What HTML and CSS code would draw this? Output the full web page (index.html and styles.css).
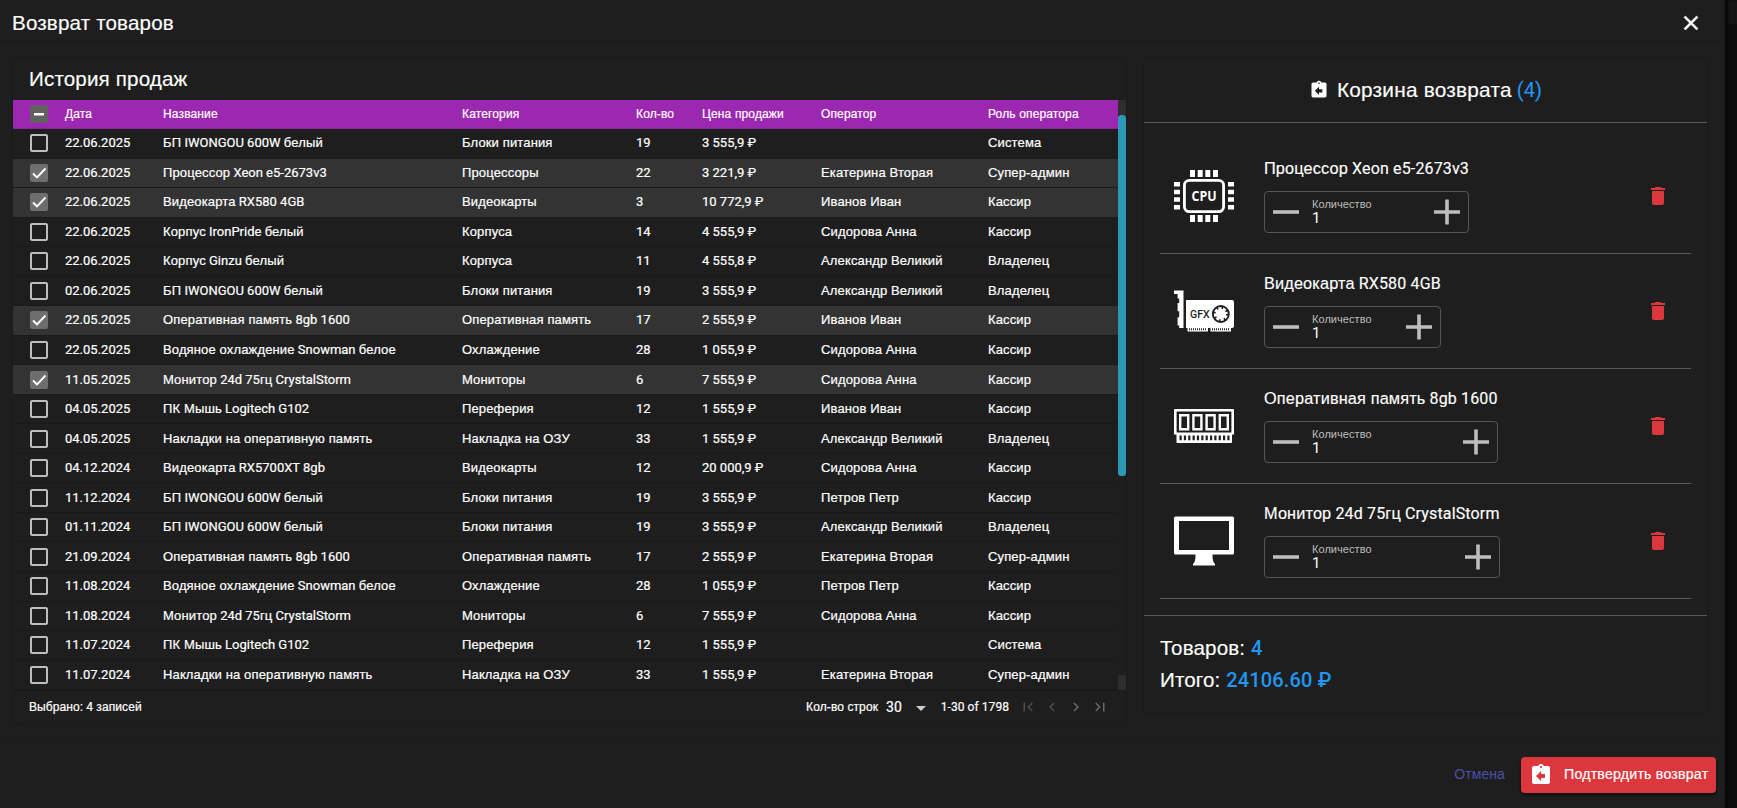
FILE: index.html
```html
<!DOCTYPE html>
<html lang="ru">
<head>
<meta charset="utf-8">
<title>Возврат товаров</title>
<link rel="stylesheet" href="styles.css">
</head>
<body>
<svg class="sprite" width="0" height="0">
  <symbol id="return" viewBox="0 0 24 24"><path d="M19 3h-4.18C14.4 1.84 13.3 1 12 1s-2.4.84-2.82 2H5c-1.1 0-2 .9-2 2v14c0 1.1.9 2 2 2h14c1.1 0 2-.9 2-2V5c0-1.1-.9-2-2-2zm-7 0c.55 0 1 .45 1 1s-.45 1-1 1-1-.45-1-1 .45-1 1-1zm4 12h-4v3l-5-5 5-5v3h4v4z"/></symbol>
  <symbol id="trash" viewBox="0 0 24 24"><path d="M6 19c0 1.1.9 2 2 2h8c1.100 0 2-.9 2-2V7H6v12zM19 4h-3.500l-1-1h-5l-1 1H5v2h14V4z"/></symbol>
  <symbol id="off" viewBox="0 0 24 24"><path d="M19 5v14H5V5h14m0-2H5c-1.100 0-2 .9-2 2v14c0 1.100.9 2 2 2h14c1.100 0 2-.9 2-2V5c0-1.100-.9-2-2-2z"/></symbol>
  <symbol id="on" viewBox="0 0 24 24"><rect x="3" y="3" width="18" height="18" rx="2" fill="#6e6e6e"/><path d="M6 12.500l4 4 8.500-9" fill="none" stroke="#fff" stroke-width="1.900"/></symbol>
  <symbol id="some" viewBox="0 0 24 24"><rect x="3" y="3" width="18" height="18" rx="2" fill="#616161"/><path d="M7 11h10v2.500H7z" fill="#fff"/></symbol>
</svg>
<div class="screen">
<div class="dialog">
  <header class="dialog-head">
    <h1>Возврат товаров</h1>
    <svg class="close" viewBox="0 0 24 24"><path d="M19 6.410L17.590 5 12 10.590 6.410 5 5 6.410 10.590 12 5 17.590 6.410 19 12 13.410 17.590 19 19 17.590 13.410 12z"/></svg>
  </header>
  <main class="content">
    <section class="card history">
      <h2>История продаж</h2>
      <div class="table-wrap">
        <table>
          <colgroup><col class="c-check"><col class="c-date"><col class="c-name"><col class="c-cat"><col class="c-qty"><col class="c-price"><col class="c-oper"><col class="c-role"></colgroup>
          <thead><tr><th><svg class="box"><use href="#some"/></svg></th><th>Дата</th><th>Название</th><th>Категория</th><th>Кол-во</th><th>Цена продажи</th><th>Оператор</th><th>Роль оператора</th></tr></thead>
          <tbody>
            <tr><td><svg class="box"><use href="#off"/></svg></td><td class="r">22.06.2025</td><td>БП<span class="r"> IWONGOU 600W </span>белый</td><td>Блоки питания</td><td class="r">19</td><td class="r p">3 555,9 ₽</td><td></td><td>Система</td></tr>
            <tr class="sel"><td><svg class="box"><use href="#on"/></svg></td><td class="r">22.06.2025</td><td>Процессор<span class="r"> Xeon e5-2673v3</span></td><td>Процессоры</td><td class="r">22</td><td class="r p">3 221,9 ₽</td><td>Екатерина Вторая</td><td>Супер-админ</td></tr>
            <tr class="sel"><td><svg class="box"><use href="#on"/></svg></td><td class="r">22.06.2025</td><td>Видеокарта<span class="r"> RX580 4GB</span></td><td>Видеокарты</td><td class="r">3</td><td class="r p">10 772,9 ₽</td><td>Иванов Иван</td><td>Кассир</td></tr>
            <tr><td><svg class="box"><use href="#off"/></svg></td><td class="r">22.06.2025</td><td>Корпус<span class="r"> IronPride </span>белый</td><td>Корпуса</td><td class="r">14</td><td class="r p">4 555,9 ₽</td><td>Сидорова Анна</td><td>Кассир</td></tr>
            <tr><td><svg class="box"><use href="#off"/></svg></td><td class="r">22.06.2025</td><td>Корпус<span class="r"> Ginzu </span>белый</td><td>Корпуса</td><td class="r">11</td><td class="r p">4 555,8 ₽</td><td>Александр Великий</td><td>Владелец</td></tr>
            <tr><td><svg class="box"><use href="#off"/></svg></td><td class="r">02.06.2025</td><td>БП<span class="r"> IWONGOU 600W </span>белый</td><td>Блоки питания</td><td class="r">19</td><td class="r p">3 555,9 ₽</td><td>Александр Великий</td><td>Владелец</td></tr>
            <tr class="sel"><td><svg class="box"><use href="#on"/></svg></td><td class="r">22.05.2025</td><td>Оперативная память<span class="r"> 8gb 1600</span></td><td>Оперативная память</td><td class="r">17</td><td class="r p">2 555,9 ₽</td><td>Иванов Иван</td><td>Кассир</td></tr>
            <tr><td><svg class="box"><use href="#off"/></svg></td><td class="r">22.05.2025</td><td>Водяное охлаждение<span class="r"> Snowman </span>белое</td><td>Охлаждение</td><td class="r">28</td><td class="r p">1 055,9 ₽</td><td>Сидорова Анна</td><td>Кассир</td></tr>
            <tr class="sel"><td><svg class="box"><use href="#on"/></svg></td><td class="r">11.05.2025</td><td>Монитор<span class="r"> 24d 75</span>гц<span class="r"> CrystalStorm</span></td><td>Мониторы</td><td class="r">6</td><td class="r p">7 555,9 ₽</td><td>Сидорова Анна</td><td>Кассир</td></tr>
            <tr><td><svg class="box"><use href="#off"/></svg></td><td class="r">04.05.2025</td><td>ПК Мышь<span class="r"> Logitech G102</span></td><td>Переферия</td><td class="r">12</td><td class="r p">1 555,9 ₽</td><td>Иванов Иван</td><td>Кассир</td></tr>
            <tr><td><svg class="box"><use href="#off"/></svg></td><td class="r">04.05.2025</td><td>Накладки на оперативную память</td><td>Накладка на ОЗУ</td><td class="r">33</td><td class="r p">1 555,9 ₽</td><td>Александр Великий</td><td>Владелец</td></tr>
            <tr><td><svg class="box"><use href="#off"/></svg></td><td class="r">04.12.2024</td><td>Видеокарта<span class="r"> RX5700XT 8gb</span></td><td>Видеокарты</td><td class="r">12</td><td class="r p">20 000,9 ₽</td><td>Сидорова Анна</td><td>Кассир</td></tr>
            <tr><td><svg class="box"><use href="#off"/></svg></td><td class="r">11.12.2024</td><td>БП<span class="r"> IWONGOU 600W </span>белый</td><td>Блоки питания</td><td class="r">19</td><td class="r p">3 555,9 ₽</td><td>Петров Петр</td><td>Кассир</td></tr>
            <tr><td><svg class="box"><use href="#off"/></svg></td><td class="r">01.11.2024</td><td>БП<span class="r"> IWONGOU 600W </span>белый</td><td>Блоки питания</td><td class="r">19</td><td class="r p">3 555,9 ₽</td><td>Александр Великий</td><td>Владелец</td></tr>
            <tr><td><svg class="box"><use href="#off"/></svg></td><td class="r">21.09.2024</td><td>Оперативная память<span class="r"> 8gb 1600</span></td><td>Оперативная память</td><td class="r">17</td><td class="r p">2 555,9 ₽</td><td>Екатерина Вторая</td><td>Супер-админ</td></tr>
            <tr><td><svg class="box"><use href="#off"/></svg></td><td class="r">11.08.2024</td><td>Водяное охлаждение<span class="r"> Snowman </span>белое</td><td>Охлаждение</td><td class="r">28</td><td class="r p">1 055,9 ₽</td><td>Петров Петр</td><td>Кассир</td></tr>
            <tr><td><svg class="box"><use href="#off"/></svg></td><td class="r">11.08.2024</td><td>Монитор<span class="r"> 24d 75</span>гц<span class="r"> CrystalStorm</span></td><td>Мониторы</td><td class="r">6</td><td class="r p">7 555,9 ₽</td><td>Сидорова Анна</td><td>Кассир</td></tr>
            <tr><td><svg class="box"><use href="#off"/></svg></td><td class="r">11.07.2024</td><td>ПК Мышь<span class="r"> Logitech G102</span></td><td>Переферия</td><td class="r">12</td><td class="r p">1 555,9 ₽</td><td></td><td>Система</td></tr>
            <tr><td><svg class="box"><use href="#off"/></svg></td><td class="r">11.07.2024</td><td>Накладки на оперативную память</td><td>Накладка на ОЗУ</td><td class="r">33</td><td class="r p">1 555,9 ₽</td><td>Екатерина Вторая</td><td>Супер-админ</td></tr>
          </tbody>
        </table>
        <div class="scrollbar"><i class="arrow"></i><i class="thumb"></i><i class="arrow end"></i></div>
      </div>
      <footer class="pager">
        <span class="chosen">Выбрано:<span class="r"> 4 </span>записей</span>
        <span class="rows-label">Кол-во строк</span>
        <span class="rows-count r">30</span>
        <svg class="caret" viewBox="0 0 10 5"><path d="M0 0h10L5 5z"/></svg>
        <span class="range r">1-30 of 1798</span>
        <svg class="nav" viewBox="0 0 24 24"><path d="M18.410 16.590L13.820 12l4.590-4.590L17 6l-6 6 6 6zM6 6h2v12H6z"/></svg>
        <svg class="nav" viewBox="0 0 24 24"><path d="M15.410 7.410L14 6l-6 6 6 6 1.410-1.410L10.830 12z"/></svg>
        <svg class="nav lit" viewBox="0 0 24 24"><path d="M10 6L8.590 7.410 13.170 12l-4.580 4.590L10 18l6-6z"/></svg>
        <svg class="nav lit" viewBox="0 0 24 24"><path d="M5.590 7.410L10.180 12l-4.590 4.590L7 18l6-6-6-6zM16 6h2v12h-2z"/></svg>
      </footer>
    </section>

    <section class="card basket">
      <h2 class="basket-head"><svg><use href="#return"/></svg><span>Корзина возврата</span><span class="r blue">(4)</span></h2>
      <ul class="items">
        <li>
          <svg class="pic" viewBox="0 0 60 60">
            <g fill="#fff"><path d="M16 4h5v7h-5zM23.700 4h5v7h-5zM31.300 4h5v7h-5zM39 4h5v7h-5zM16 49h5v7h-5zM23.700 49h5v7h-5zM31.300 49h5v7h-5zM39 49h5v7h-5z"/><path d="M0 16h6v4.500H0zM0 23.700h6v4.500H0zM0 31.300h6v4.500H0zM0 39h6v4.500H0zM54 16h6v4.500h-6zM54 23.700h6v4.500h-6zM54 31.300h6v4.500h-6zM54 39h6v4.500h-6z"/></g>
            <rect x="10.400" y="14.400" width="39.200" height="31.200" rx="5" fill="none" stroke="#fff" stroke-width="2.800"/>
            <text x="30" y="35" text-anchor="middle" textLength="25" lengthAdjust="spacingAndGlyphs" class="cpu">CPU</text>
          </svg>
          <div class="info"><h3>Процессор<span class="r"> Xeon e5-2673v3</span></h3>
            <div class="qty"><svg viewBox="0 0 26 26"><path d="M0 11.200h26v3.600H0z"/></svg><label>Количество<b>1</b></label><svg viewBox="0 0 26 26"><path d="M0 11.200h11.200V.5h3.600v10.700H26v3.600H14.800v10.700h-3.600V14.800H0z"/></svg></div></div>
          <svg class="del"><use href="#trash"/></svg>
        </li>
        <li>
          <svg class="pic" viewBox="0 0 60 60">
            <path fill="#fff" d="M0 9.500h9.500V47H5.200v-2.500H3.600v-8.300h1.600v-6H3.600v-8.300h1.600v-4.500H3.600V13H0z"/>
            <path fill="#fff" d="M12 19h46a2 2 0 0 1 2 2v24a2 2 0 0 1-2 2H12z"/>
            <path fill="#fff" d="M13.500 46H34v4.500H13.500zM36.500 46H57v4.500H36.500z"/>
            <path stroke="#1e1e1e" stroke-width="2" stroke-dasharray="1 1" d="M15 48.200h18M38 48.200h18"/>
            <text x="16" y="36.500" textLength="19.500" lengthAdjust="spacingAndGlyphs" class="gfx">GFX</text>
            <circle cx="46.800" cy="33" r="8" fill="none" stroke="#1e1e1e" stroke-width="1.900"/>
            <circle cx="46.800" cy="33" r="6.400" fill="none" stroke="#1e1e1e" stroke-width="2.400" stroke-dasharray="1.600 3.430"/>
          </svg>
          <div class="info"><h3>Видеокарта<span class="r"> RX580 4GB</span></h3>
            <div class="qty"><svg viewBox="0 0 26 26"><path d="M0 11.200h26v3.600H0z"/></svg><label>Количество<b>1</b></label><svg viewBox="0 0 26 26"><path d="M0 11.200h11.200V.5h3.600v10.700H26v3.600H14.800v10.700h-3.600V14.800H0z"/></svg></div></div>
          <svg class="del"><use href="#trash"/></svg>
        </li>
        <li>
          <svg class="pic" viewBox="0 0 60 60">
            <path fill="#fff" fill-rule="evenodd" d="M1 13h58a1 1 0 0 1 1 1v24.500h-2V46a1 1 0 0 1-1 1H3.500a1 1 0 0 1-1-1v-7.500H0V14a1 1 0 0 1 1-1zM2.600 15.600v20.800h54.800V15.600z"/>
            <path fill="none" stroke="#fff" stroke-width="2.400" d="M6.200 19.200h8v14h-8zM19.400 19.200h8v14h-8zM32.600 19.200h8v14h-8zM45.800 19.200h8v14h-8z"/>
            <path stroke="#1e1e1e" stroke-width="4.800" stroke-dasharray="2.200 2.150" d="M5.500 41.900h50"/>
          </svg>
          <div class="info"><h3>Оперативная память<span class="r"> 8gb 1600</span></h3>
            <div class="qty"><svg viewBox="0 0 26 26"><path d="M0 11.200h26v3.600H0z"/></svg><label>Количество<b>1</b></label><svg viewBox="0 0 26 26"><path d="M0 11.200h11.200V.5h3.600v10.700H26v3.600H14.800v10.700h-3.600V14.800H0z"/></svg></div></div>
          <svg class="del"><use href="#trash"/></svg>
        </li>
        <li>
          <svg class="pic" viewBox="0 0 60 60">
            <path fill="#fff" fill-rule="evenodd" d="M1.500 5.500h57A1.500 1.500 0 0 1 60 7v35a1.500 1.500 0 0 1-1.500 1.500H38.500c0 5 .5 8 2.500 9.500v1.500H19V53c2-1.500 2.500-4.500 2.500-9.500H1.500A1.500 1.500 0 0 1 0 42V7A1.500 1.500 0 0 1 1.500 5.500zM5 10v29h50V10z"/>
          </svg>
          <div class="info"><h3>Монитор<span class="r"> 24d 75</span>гц<span class="r"> CrystalStorm</span></h3>
            <div class="qty"><svg viewBox="0 0 26 26"><path d="M0 11.200h26v3.600H0z"/></svg><label>Количество<b>1</b></label><svg viewBox="0 0 26 26"><path d="M0 11.200h11.200V.5h3.600v10.700H26v3.600H14.800v10.700h-3.600V14.800H0z"/></svg></div></div>
          <svg class="del"><use href="#trash"/></svg>
        </li>
      </ul>
      <div class="totals">
        <p>Товаров: <span class="r blue">4</span></p>
        <p>Итого: <span class="r blue">24106.60 ₽</span></p>
      </div>
    </section>
  </main>
  <footer class="actions">
    <button class="cancel">Отмена</button>
    <button class="confirm"><svg><use href="#return"/></svg>Подтвердить возврат</button>
  </footer>
</div>
<div class="backdrop"></div>
</div>
</body>
</html>
```
FILE: styles.css
```css
* { box-sizing: border-box; }
body { margin: 0; background: #0d0d0d; color: #fff; font-family: "Liberation Sans", Arial, sans-serif; overflow: hidden; }
h1, h2, h3, p, ul { margin: 0; padding: 0; font-weight: 400; list-style: none; }
svg { display: block; fill: currentColor; flex: none; }
.sprite { position: absolute; }
button { border: 0; background: none; font-family: inherit; padding: 0; }
.r { font-family: Roboto, sans-serif; font-weight: 400; white-space: pre; }
.blue { color: #2196f3; }

.screen { display: flex; width: 1737px; height: 808px; }
.dialog { width: 1724px; display: flex; flex-direction: column; background: #1e1e1e; }
.backdrop { flex: 1; background: linear-gradient(#151515 24px, #0d0d0d 24px); border-left: 1px solid #181818; box-shadow: inset 3px 0 2px #090909; }

.dialog-head { height: 41px; border-bottom: 1px solid #1a1a1a; display: flex; justify-content: space-between; align-items: center; padding: 5px 21px 0 12px; }
.dialog-head h1, .history h2 { font-size: 20.6px; letter-spacing: .15px; line-height: 24px; -webkit-text-stroke: .15px; }
.close { width: 24px; height: 24px; stroke: #fff; stroke-width: .6px; }

.content { height: 700px; padding: 17px 17px 0 13px; border-bottom: 1px solid #1a1a1a; display: flex; justify-content: space-between; align-items: flex-start; }
.card { border-radius: 4px; box-shadow: 0 0 0 1px #1a1a1a; }
.history { width: 1113px; height: 665px; }
.history h2 { height: 42px; padding: 9px 16px 0; }
.table-wrap { display: flex; height: 590px; }
table { width: 1105px; table-layout: fixed; border-collapse: separate; border-spacing: 0; font-size: 13px; }
.c-check { width: 52px; } .c-date { width: 98px; } .c-name { width: 299px; } .c-cat { width: 174px; }
.c-qty { width: 66px; } .c-price { width: 119px; } .c-oper { width: 167px; }
th, td { padding: 0; text-align: left; white-space: nowrap; line-height: 18px; letter-spacing: .14px; -webkit-text-stroke: .2px; }
th { height: 29px; background: #9c27b0; border-bottom: 1px solid #86269a; font-weight: 400; font-size: 12px; }
td { height: 29.54px; border-bottom: 1px solid #191919; }
td.r, td .r { letter-spacing: 0; }
.sel td { background: #333; }
.box { width: 24px; height: 24px; margin-left: 14px; color: #bdbdbd; }
.scrollbar { width: 8px; display: flex; flex-direction: column; }
.arrow { height: 15px; background: #2e2e2e; }
.end { margin-top: auto; }
.thumb { height: 361px; border-radius: 3px; background: #2d98b5; }

.pager { height: 33px; display: flex; align-items: center; padding: 0 17px 0 16px; font-size: 12px; border-top: 1px solid #191919; letter-spacing: .1px; -webkit-text-stroke: .2px; }
.rows-label { margin-left: auto; }
.rows-count { margin-left: 8px; font-size: 14px; letter-spacing: 0; }
.caret { width: 10px; height: 5px; margin: 2px 15px 0 14px; color: #ccc; }
.range { margin-right: 4px; letter-spacing: .06px; }
.nav { width: 18px; height: 18px; margin-left: 6px; color: #4c4c4c; }
.lit { color: #6a6a6a; }

.basket { width: 563px; height: 654px; }
.basket-head { height: 65px; display: flex; align-items: center; justify-content: center; font-size: 20.8px; letter-spacing: .22px; -webkit-text-stroke: .15px; border-bottom: 1px solid #5a5a5a; }
.basket-head svg { width: 20px; height: 20px; margin-right: 8px; }
.basket-head .blue { font-size: 20px; letter-spacing: .1px; margin-left: 5px; }
.items { height: 493px; padding: 16px 16px 0; border-bottom: 1px solid #5a5a5a; }
.items li { height: 115px; display: flex; align-items: center; border-bottom: 1px solid #5a5a5a; padding: 0 21px 0 14px; }
.pic { width: 60px; height: 60px; margin-right: 30px; }
.cpu { font: 700 14px "Open Sans", sans-serif; }
.gfx { font: 500 10px Roboto, sans-serif; fill: #1e1e1e; }
.info { padding-bottom: 3px; }
.info h3 { font-size: 16.3px; line-height: 24px; margin-bottom: 10px; letter-spacing: .15px; -webkit-text-stroke: .15px; }
.info h3 .r { font-size: 16px; letter-spacing: .15px; }
.qty { height: 42px; border: 1px solid #555; border-radius: 4px; display: flex; align-items: center; padding: 0 8px; color: #bdbdbd; }
.qty svg { width: 26px; height: 26px; }
.qty label { flex: 1; margin-left: 13px; padding-bottom: 2px; font-size: 11px; line-height: 13px; letter-spacing: .05px; }
.qty b { display: block; font: 400 15px/14px Roboto, sans-serif; color: #fff; }
.del { width: 24px; height: 24px; margin-left: auto; color: #dc373c; }
.totals { padding: 16px 16px; font-size: 20.6px; line-height: 32px; letter-spacing: .12px; -webkit-text-stroke: .15px; }
.totals .r { font-size: 20px; letter-spacing: .15px; font-weight: 500; -webkit-text-stroke: 0; }

.actions { flex: 1; display: flex; justify-content: flex-end; align-items: flex-start; padding: 16px 8px 0; }
.cancel { color: #4c50a5; font-size: 14px; letter-spacing: .1px; height: 34px; margin-right: 16px; }
.confirm { width: 195px; height: 36px; border-radius: 4px; background: #dc373c; color: #fff; font-size: 14.2px; letter-spacing: .2px; -webkit-text-stroke: .2px; white-space: nowrap; display: flex; align-items: center; padding: 0 0 2px 8px; box-shadow: 0 2px 3px rgba(0,0,0,.5); }
.confirm svg { width: 24px; height: 24px; margin: 2px 11px 0 0; }
```
